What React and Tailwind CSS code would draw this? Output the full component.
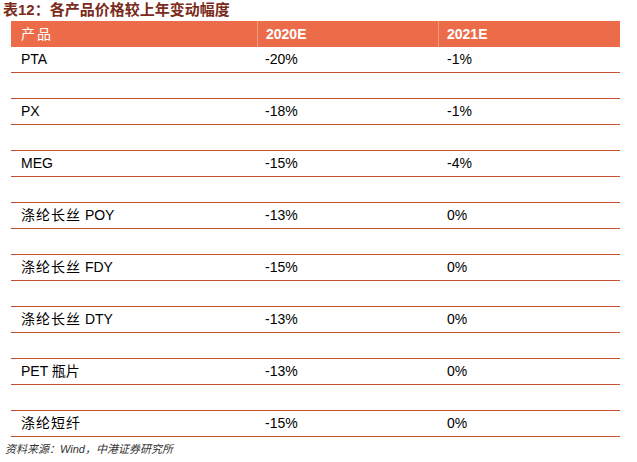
const rows = [
  [['', 'PTA'], '-20%', '-1%'],
  [['', 'PX'], '-18%', '-1%'],
  [['', 'MEG'], '-15%', '-4%'],
  [['涤纶长丝', ' POY'], '-13%', '0%'],
  [['涤纶长丝', ' FDY'], '-15%', '0%'],
  [['涤纶长丝', ' DTY'], '-13%', '0%'],
  [['', 'PET 瓶片'], '-13%', '0%'],
  [['涤纶短纤', ''], '-15%', '0%'],
];

const cols = 'grid grid-cols-[246px_181px_182px]';

export default function App() {
  return (
    <div className="w-[637px] h-[462px] bg-white font-['Liberation_Sans','Noto_Sans_CJK_SC',sans-serif] text-black">
      {/* Title */}
      <div className="h-[21px] pl-[3px] pt-[1px] text-[15px] leading-[17px] font-bold text-[#7a2b1b]">
        表12：各产品价格较上年变动幅度
      </div>

      <div className="ml-[11px] w-[609px]">
        {/* Header */}
        <div className={`${cols} h-[26px] bg-[#ec6c49] text-white text-[14px] font-bold`}>
          <div className="flex items-center pl-[10px] font-normal tracking-[2px]">产品</div>
          <div className="flex items-center pl-[8px] border-l border-[#f29a7e]">2020E</div>
          <div className="flex items-center pl-[8px] border-l border-[#f29a7e]">2021E</div>
        </div>

        {rows.map((r, i) => (
          <div key={r[0].join('')}>
            {i > 0 && <div className="h-[26px] border-b border-[#c0522f]" />}
            <div className={`${cols} h-[26px] border-b border-[#c0522f] text-[14px]`}>
              <div className="flex items-center pl-[10px] whitespace-pre">
                {r[0][0] && <span className="tracking-[1px]">{r[0][0]}</span>}
                <span>{r[0][1]}</span>
              </div>
              <div className="flex items-center pl-[8px]">{r[1]}</div>
              <div className="flex items-center pl-[9px]">{r[2]}</div>
            </div>
          </div>
        ))}
      </div>

      {/* Source */}
      <div className="pl-[5px] pt-[5px] text-[11px] leading-[14px] italic text-[#333]">
        资料来源：Wind，中港证券研究所
      </div>
    </div>
  );
}
